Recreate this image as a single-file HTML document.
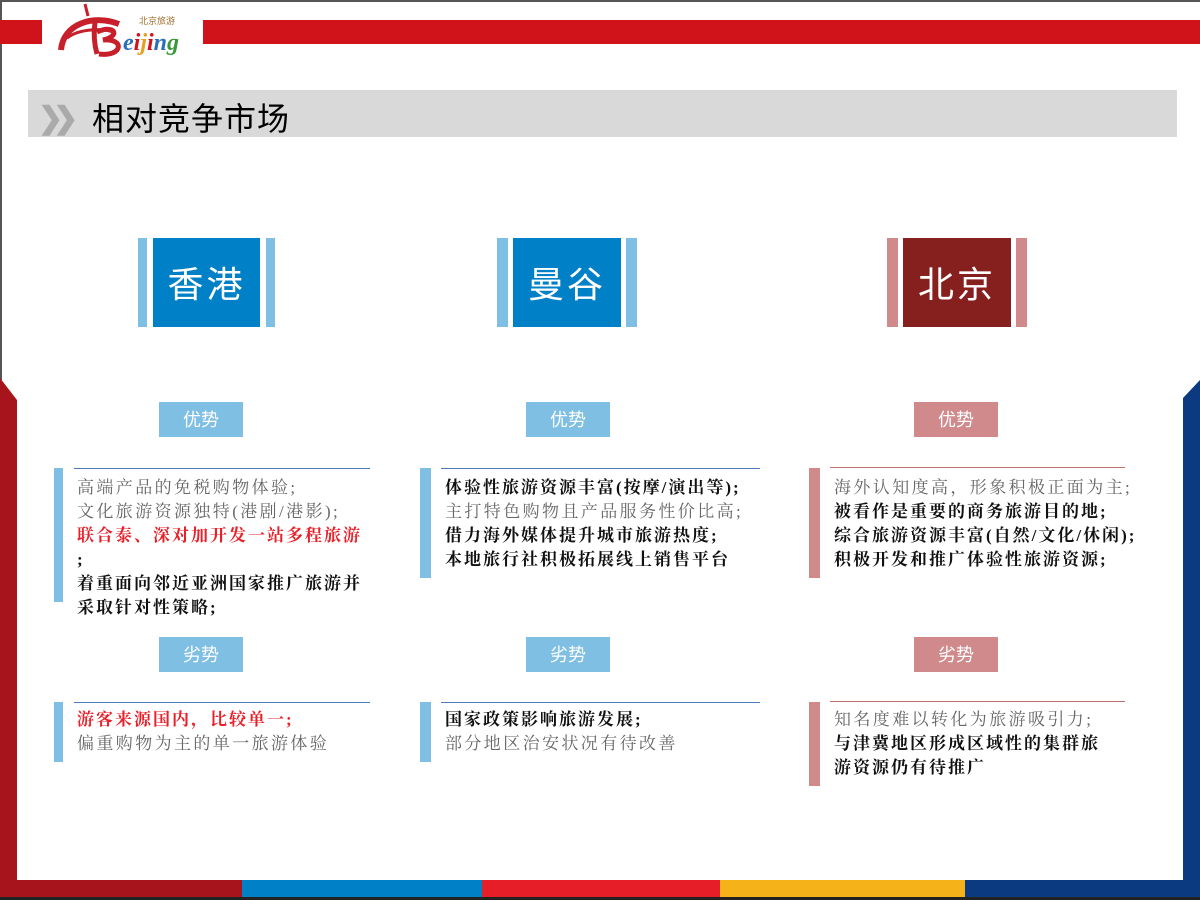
<!DOCTYPE html>
<html><head><meta charset="utf-8"><style>
*{margin:0;padding:0;box-sizing:border-box}
body{width:1200px;height:900px;position:relative;background:#fff;overflow:hidden;font-family:"Liberation Sans","Noto Sans CJK SC",sans-serif}
.a{position:absolute}
.t{position:absolute;font-size:17px;line-height:24px;letter-spacing:2.4px;white-space:nowrap;font-family:"Liberation Serif","Noto Serif CJK SC",serif}
.g{color:#666}.k{color:#111;font-weight:bold;letter-spacing:2px}.r{color:#e8202a;font-weight:bold;letter-spacing:2px}
.city{position:absolute;color:#fff;font-size:36px;text-align:center;line-height:89px;font-family:"Noto Sans CJK SC",sans-serif;letter-spacing:3px}
.lab{position:absolute;width:84px;height:35px;color:#fff;font-size:18px;text-align:center;line-height:35px;font-family:"Noto Sans CJK SC",sans-serif}
</style></head><body>
<div class="a" style="left:0;top:0;width:1200px;height:2px;background:#555"></div>
<div class="a" style="left:0;top:0;width:2px;height:380px;background:#555"></div>
<div class="a" style="left:0;top:20px;width:42px;height:24px;background:#d0121b"></div>
<div class="a" style="left:203px;top:20px;width:997px;height:24px;background:#d0121b"></div>
<svg class="a" style="left:55px;top:2px" width="140" height="58" viewBox="0 0 140 58">
<path d="M6 48 C8 22 38 12 64 22" stroke="#c8202a" stroke-width="6" fill="none"/>
<path d="M12 36 C25 26 50 26 60 31" stroke="#c8202a" stroke-width="3" fill="none"/>
<path d="M30 2 L33 14" stroke="#c8202a" stroke-width="3"/>
<path d="M40 20 C38 35 40 45 42 52 M42 30 C60 22 66 34 48 38 C70 36 68 55 44 52" stroke="#c8202a" stroke-width="5" fill="none"/>
<text x="84" y="22" font-size="9" fill="#a07030" font-family="Noto Sans CJK SC">北京旅游</text>
<text x="68" y="48" font-size="24" font-style="italic" font-weight="bold" font-family="Liberation Serif"><tspan fill="#2a70b8">e</tspan><tspan fill="#d0121b">i</tspan><tspan fill="#e8a020">j</tspan><tspan fill="#d0121b">i</tspan><tspan fill="#2a70b8">n</tspan><tspan fill="#3a9a3a">g</tspan></text>
</svg>
<div class="a" style="left:28px;top:90px;width:1149px;height:47px;background:#d9d9d9"></div>
<div class="a" style="left:38px;top:101px;font-size:30px;font-weight:bold;color:#aaa;letter-spacing:-10px">❯❯</div>
<div class="a" style="left:92px;top:94px;font-size:32px;color:#000;font-family:'Noto Sans CJK SC',sans-serif;letter-spacing:1px">相对竞争市场</div>

<div class="a" style="left:0;top:378px;width:17px;height:520px;background:#a8141c;clip-path:polygon(0 0,100% 22px,100% 100%,0 100%)"></div>
<div class="a" style="left:1183px;top:380px;width:17px;height:520px;background:#0c3a80;clip-path:polygon(100% 0,100% 100%,0 100%,0 18px)"></div>
<div class="a" style="left:0;top:880px;width:242px;height:20px;background:#a8141c"></div>
<div class="a" style="left:242px;top:880px;width:240px;height:20px;background:#0080c6"></div>
<div class="a" style="left:482px;top:880px;width:238px;height:20px;background:#e61e28"></div>
<div class="a" style="left:720px;top:880px;width:245px;height:20px;background:#f6b219"></div>
<div class="a" style="left:965px;top:880px;width:235px;height:20px;background:#0c3a80"></div>
<div class="a" style="left:0;top:897px;width:1200px;height:3px;background:#222"></div>

<!-- HK -->
<div class="a" style="left:138px;top:238px;width:9px;height:89px;background:#7fbfe3"></div>
<div class="a" style="left:266px;top:238px;width:9px;height:89px;background:#7fbfe3"></div>
<div class="city" style="left:153px;top:238px;width:107px;height:89px;background:#0080c6">香港</div>
<div class="lab" style="left:159px;top:402px;background:#7fbfe3">优势</div>
<div class="lab" style="left:159px;top:637px;background:#7fbfe3">劣势</div>
<div class="a" style="left:54px;top:468px;width:9px;height:134px;background:#7fbfe3"></div>
<div class="a" style="left:74px;top:468px;width:296px;height:1px;background:#4a7cc0"></div>
<div class="t" style="left:77px;top:476px"><span class="g">高端产品的免税购物体验;</span><br><span class="g">文化旅游资源独特(港剧/港影);</span><br><span class="r">联合泰、深对加开发一站多程旅游</span><br><span class="k">;</span><br><span class="k">着重面向邻近亚洲国家推广旅游并</span><br><span class="k">采取针对性策略;</span></div>
<div class="a" style="left:54px;top:702px;width:9px;height:60px;background:#7fbfe3"></div>
<div class="a" style="left:74px;top:702px;width:296px;height:1px;background:#4a7cc0"></div>
<div class="t" style="left:77px;top:708px"><span class="r">游客来源国内，比较单一;</span><br><span class="g">偏重购物为主的单一旅游体验</span></div>

<!-- BKK -->
<div class="a" style="left:497px;top:238px;width:11px;height:89px;background:#7fbfe3"></div>
<div class="a" style="left:626px;top:238px;width:11px;height:89px;background:#7fbfe3"></div>
<div class="city" style="left:513px;top:238px;width:108px;height:89px;background:#0080c6">曼谷</div>
<div class="lab" style="left:526px;top:402px;background:#7fbfe3">优势</div>
<div class="lab" style="left:526px;top:637px;background:#7fbfe3">劣势</div>
<div class="a" style="left:420px;top:468px;width:11px;height:110px;background:#7fbfe3"></div>
<div class="a" style="left:441px;top:468px;width:319px;height:1px;background:#4a7cc0"></div>
<div class="t" style="left:445px;top:476px"><span class="k">体验性旅游资源丰富(按摩/演出等);</span><br><span class="g">主打特色购物且产品服务性价比高;</span><br><span class="k">借力海外媒体提升城市旅游热度;</span><br><span class="k">本地旅行社积极拓展线上销售平台</span></div>
<div class="a" style="left:420px;top:702px;width:11px;height:60px;background:#7fbfe3"></div>
<div class="a" style="left:441px;top:702px;width:319px;height:1px;background:#4a7cc0"></div>
<div class="t" style="left:445px;top:708px"><span class="k">国家政策影响旅游发展;</span><br><span class="g">部分地区治安状况有待改善</span></div>

<!-- BJ -->
<div class="a" style="left:887px;top:238px;width:11px;height:89px;background:#d08a8c"></div>
<div class="a" style="left:1016px;top:238px;width:11px;height:89px;background:#d08a8c"></div>
<div class="city" style="left:903px;top:238px;width:108px;height:89px;background:#86201f">北京</div>
<div class="lab" style="left:914px;top:402px;background:#d08a8c">优势</div>
<div class="lab" style="left:914px;top:637px;background:#d08a8c">劣势</div>
<div class="a" style="left:809px;top:468px;width:11px;height:110px;background:#d08a8c"></div>
<div class="a" style="left:830px;top:467px;width:295px;height:1px;background:#c07070"></div>
<div class="t" style="left:834px;top:476px"><span class="g">海外认知度高，形象积极正面为主;</span><br><span class="k">被看作是重要的商务旅游目的地;</span><br><span class="k">综合旅游资源丰富(自然/文化/休闲);</span><br><span class="k">积极开发和推广体验性旅游资源;</span></div>
<div class="a" style="left:809px;top:702px;width:11px;height:84px;background:#d08a8c"></div>
<div class="a" style="left:830px;top:701px;width:295px;height:1px;background:#c07070"></div>
<div class="t" style="left:834px;top:708px"><span class="g">知名度难以转化为旅游吸引力;</span><br><span class="k">与津冀地区形成区域性的集群旅</span><br><span class="k">游资源仍有待推广</span></div>
</body></html>
